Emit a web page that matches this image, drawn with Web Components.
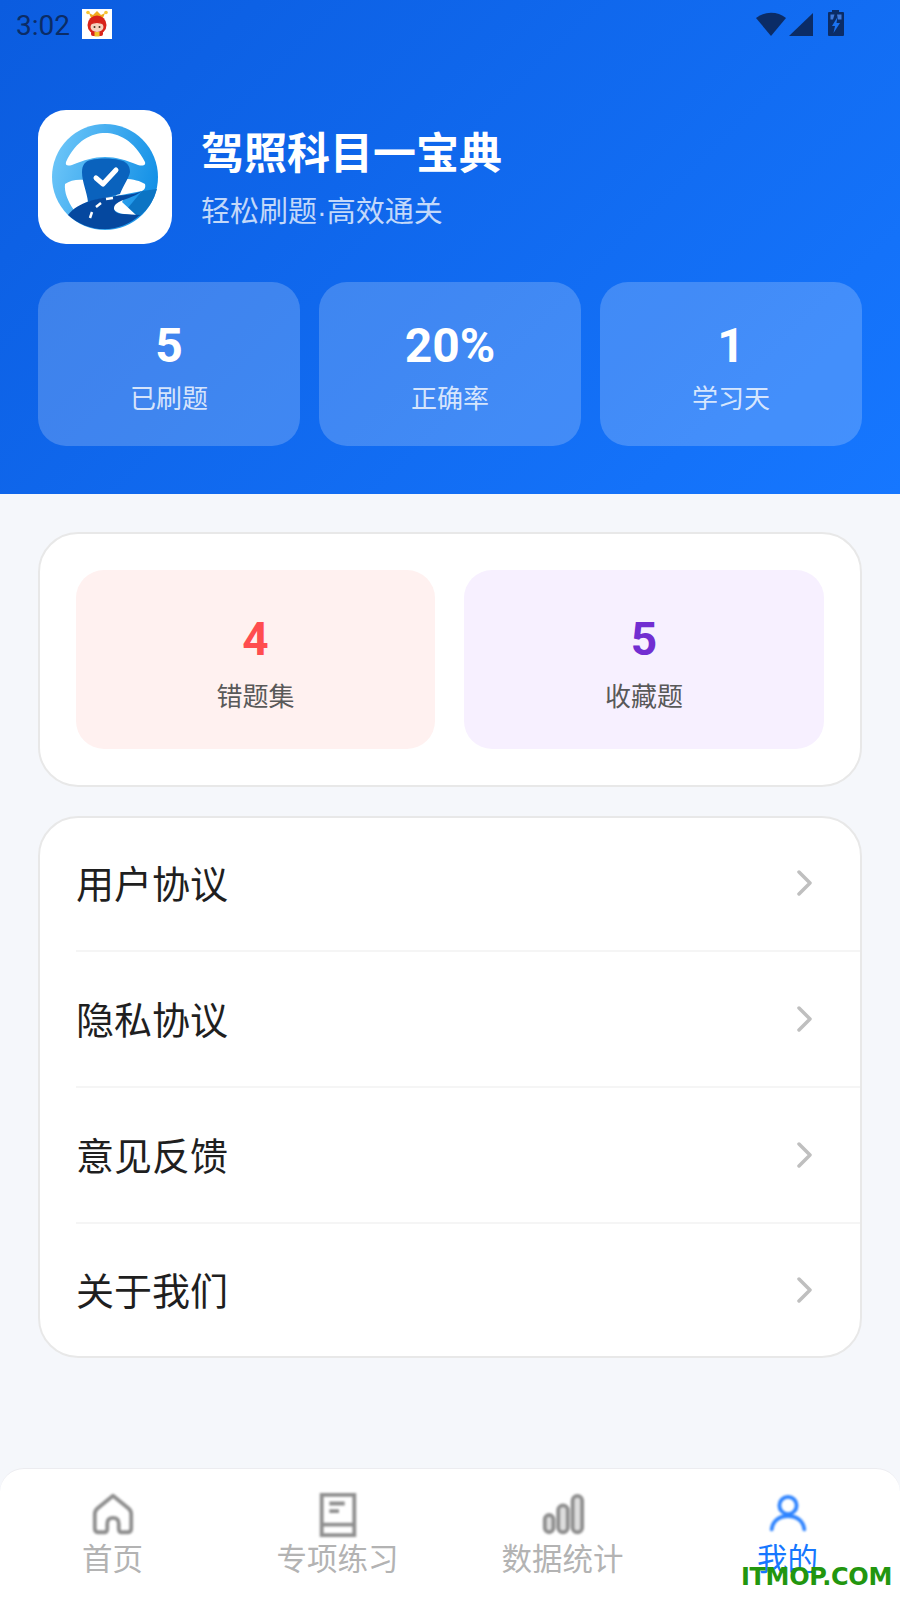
<!DOCTYPE html>
<html lang="zh">
<head>
<meta charset="utf-8">
<title>驾照科目一宝典</title>
<style>
  html, body { margin: 0; padding: 0; }
  body { font-family: "Noto Sans CJK SC", "Liberation Sans", sans-serif; background: #f5f7fb; }
</style>
</head>
<body>
<my-page></my-page>

<script>
const CJK = '"Noto Sans CJK SC", "Liberation Sans", sans-serif';
const NUM = 'Roboto, "Noto Sans CJK SC", sans-serif';

class StatusBar extends HTMLElement {
  constructor() {
    super();
    this.attachShadow({ mode: 'open' }).innerHTML = `
    <style>
      :host { display: flex; align-items: flex-start; height: 52px; padding: 0 56px 0 16px; color: #0b2c66; }
      .time { font: 28px/52px ${NUM}; }
      .mascot { display: block; width: 30px; height: 30px; margin: 9px 0 0 12px; }
      .right { display: block; margin: 10px 0 0 auto; width: 88px; height: 28px; }
    </style>
    <span class="time">3:02</span>
    <svg class="mascot" viewBox="0 0 30 30">
      <rect width="30" height="30" fill="#fff"/>
      <path d="M9 9L7 4L11 6L15 2L19 6L23 4L21 9Z" fill="#f0a81e"/>
      <circle cx="6" cy="3.500" r="1.800" fill="#f7c531"/><circle cx="24" cy="3.500" r="1.800" fill="#f7c531"/>
      <circle cx="15" cy="16" r="9.500" fill="#d8231b"/>
      <rect x="9" y="22" width="12" height="5" rx="2" fill="#d8231b"/>
      <ellipse cx="15" cy="18" rx="6.500" ry="5" fill="#f6d2bf"/>
      <path d="M9 15C11 12 19 12 21 15L15 14Z" fill="#d8231b"/>
      <rect x="12.500" y="23" width="5" height="4.500" fill="#f0c02a"/>
      <circle cx="12.500" cy="18" r="1" fill="#432"/><circle cx="17.500" cy="18" r="1" fill="#432"/>
    </svg>
    <svg class="right" viewBox="0 0 88 28">
      <path d="M15 26L0 8A24 24 0 0 1 30 8Z" fill="currentColor"/>
      <path d="M33 26L57 3V26Z" fill="currentColor"/>
      <path d="M76 0H83V2H87A1 1 0 0 1 88 3V25A1 1 0 0 1 87 26H73A1 1 0 0 1 72 25V3A1 1 0 0 1 73 2H76Z" fill="currentColor"/>
      <path d="M74.500 4.500H78.500L77 9.500H74.500ZM81 4.500H85.500V9.500H82Z" fill="#3f78d8"/>
      <path d="M81.500 7L76 16H79L77.500 23L84 13H80.500Z" fill="#1a72f0"/>
    </svg>`;
  }
}

class AppLogo extends HTMLElement {
  constructor() {
    super();
    this.attachShadow({ mode: 'open' }).innerHTML = `
    <style>
      :host { display: block; width: 134px; height: 134px; border-radius: 28px; background: #fff; overflow: hidden; flex: none; }
      svg { display: block; width: 134px; height: 134px; }
    </style>
    <svg viewBox="0 0 134 134">
      <defs>
        <linearGradient id="ring" x1="0" y1="0.3" x2="1" y2="0.6">
          <stop offset="0" stop-color="#6cc5f8"/>
          <stop offset="1" stop-color="#118fe6"/>
        </linearGradient>
      </defs>
      <circle cx="67" cy="67" r="53" fill="url(#ring)"/>
      <path d="M104 81L119 79A53 53 0 0 1 102 106L84 105Z" fill="#0c74c4"/>
      <path d="M28 52C38 30 54 23 67 23C80 23 96 30 107 52C108 56 104 56 100 55C88 50 78 47 67 47C56 47 46 50 34 55C30 56 27 56 28 52Z" fill="#fff"/>
      <path d="M27 74C32 70 40 69 47 70C48 78 50 84 52 90L36 100C30 92 26 82 27 74Z" fill="#fff"/>
      <path d="M86 69C96 69 102 71 107 74C108 78 106 80 104 81L78 86C82 80 85 75 86 69Z" fill="#fff"/>
      <path d="M53 50C60 48 74 48 81 50C88 51 92 55 92 62C91 68 86 74 82 84L50 92C49 82 44 72 44 62C44 55 47 51 53 50Z" fill="#0a62bd"/>
      <path d="M58 68L65 74L78 60" fill="none" stroke="#fff" stroke-width="5" stroke-linecap="round" stroke-linejoin="round"/>
      <path d="M87 87C80 90 74 94 75 98C77 103 86 105 98 105L84 92Z" fill="#fff"/>
      <path d="M30 105C40 92 60 88 78 86C88 85 98 84 104 81C96 88 84 89 78 94C74 98 76 103 84 104L102 105A53 53 0 0 1 30 105Z" fill="#05489f"/>
      <path d="M52 108L54 102M58 97L63 93M68 89L75 88" fill="none" stroke="#fff" stroke-width="2.500"/>
    </svg>`;
  }
}

class StatCard extends HTMLElement {
  constructor() {
    super();
    this.attachShadow({ mode: 'open' }).innerHTML = `
    <style>
      :host { display: flex; flex-direction: column; align-items: center; height: 164px; box-sizing: border-box; padding-top: 36px; border-radius: 28px; background: rgba(255,255,255,.2); }
      .value { font: 700 48px/56px ${NUM}; color: #fff; }
      .label { margin-top: 5px; font: 26px/36px ${CJK}; color: rgba(255,255,255,.8); }
    </style>
    <div class="value"></div>
    <div class="label"><slot></slot></div>`;
    this.shadowRoot.querySelector('.value').textContent = this.getAttribute('value');
  }
}

class AppHeader extends HTMLElement {
  constructor() {
    super();
    this.attachShadow({ mode: 'open' }).innerHTML = `
    <style>
      :host { display: block; height: 494px; box-sizing: border-box; background: linear-gradient(135deg, #0b5cdf 0%, #1677ff 100%); }
      .brand { display: flex; align-items: center; gap: 29px; margin: 58px 38px 38px; }
      .title { font: 700 43px/54px ${CJK}; color: #fff; }
      .sub { margin-top: 12px; font: 29px/40px ${CJK}; color: rgba(255,255,255,.75); }
      .sub span { font-family: "Liberation Sans", sans-serif; }
      .stats { display: grid; grid-template-columns: repeat(3, 1fr); gap: 19px; margin: 0 38px; }
    </style>
    <status-bar></status-bar>
    <div class="brand">
      <app-logo></app-logo>
      <div>
        <div class="title">驾照科目一宝典</div>
        <div class="sub">轻松刷题<span>·</span>高效通关</div>
      </div>
    </div>
    <div class="stats"><slot></slot></div>`;
  }
}

class CountTile extends HTMLElement {
  constructor() {
    super();
    this.attachShadow({ mode: 'open' }).innerHTML = `
    <style>
      :host { display: flex; flex-direction: column; align-items: center; height: 179px; box-sizing: border-box; padding-top: 42px; border-radius: 28px; }
      :host([tone="red"]) { background: #fff1f0; }
      :host([tone="purple"]) { background: #f7f0ff; }
      .value { font: 700 46px/54px ${NUM}; }
      :host([tone="red"]) .value { color: #ff4d4f; }
      :host([tone="purple"]) .value { color: #722ed1; }
      .label { margin-top: 11px; font: 26px/36px ${CJK}; color: #595959; }
    </style>
    <div class="value"></div>
    <div class="label"><slot></slot></div>`;
    this.shadowRoot.querySelector('.value').textContent = this.getAttribute('value');
  }
}

class AppCard extends HTMLElement {
  constructor() {
    super();
    this.attachShadow({ mode: 'open' }).innerHTML = `
    <style>
      :host { display: block; box-sizing: border-box; background: #fff; border: 2px solid #e8e8e8; border-radius: 40px; overflow: hidden; }
      :host([tiles]) { display: grid; grid-template-columns: 359px 360px; gap: 29px; padding: 36px; }
    </style>
    <slot></slot>`;
  }
}

class MenuRow extends HTMLElement {
  constructor() {
    super();
    this.attachShadow({ mode: 'open' }).innerHTML = `
    <style>
      :host { display: flex; align-items: center; box-sizing: content-box; height: 132px; padding: 0 46px 2px 0; margin-left: 36px; border-bottom: 2px solid #f5f5f5; font: 38px/50px ${CJK}; color: #1f1f1f; }
      :host([first]) { height: 128px; padding-bottom: 4px; }
      :host([last]) { border-bottom: 0; height: 130px; }
      svg { display: block; width: 20px; height: 28px; margin: 2px 0 0 auto; filter: blur(.6px); }
    </style>
    <slot></slot>
    <svg viewBox="0 0 20 28"><path d="M5 3L16 14L5 25" fill="none" stroke="#bfbfbf" stroke-width="3.500" stroke-linecap="round" stroke-linejoin="round"/></svg>`;
  }
}

const TAB_ICONS = {
  home: '<path d="M24 4L8 17C5.500 19 5 20 5 23V38C5 41 7 42 9 42H15C17 42 18 41 18 38V33C18 29 20 27 24 27C28 27 30 29 30 33V38C30 41 31 42 33 42H39C41 42 43 41 43 38V23C43 20 42.500 19 40 17Z" fill="none" stroke="currentColor" stroke-width="4" stroke-linejoin="round"/>',
  book: '<path d="M7 3H41V45H7ZM7 34H41M15 12H31M15 20H25" fill="none" stroke="currentColor" stroke-width="4"/>',
  bars: '<rect x="5" y="24" width="9" height="18" rx="4.500" fill="#ddd" stroke="currentColor" stroke-width="4"/><rect x="19" y="14" width="10" height="28" rx="5" fill="#ddd" stroke="currentColor" stroke-width="4"/><rect x="34" y="4" width="10" height="38" rx="5" fill="#ddd" stroke="currentColor" stroke-width="4"/>',
  user: '<circle cx="24" cy="14" r="9" fill="none" stroke="currentColor" stroke-width="4"/><path d="M7 39C8 30 15 25 24 25C33 25 40 30 41 39" fill="none" stroke="currentColor" stroke-width="4" stroke-linecap="round"/>'
};

class TabItem extends HTMLElement {
  constructor() {
    super();
    this.attachShadow({ mode: 'open' }).innerHTML = `
    <style>
      :host { display: flex; flex-direction: column; align-items: center; color: #b3b3b3; }
      :host([active]) { color: #1677ff; }
      svg { display: block; width: 46px; height: 46px; color: #8f8f8f; filter: blur(1px); }
      :host([active]) svg { color: #2f84ff; }
      .label { margin-top: 1px; font: 30.500px/36px ${CJK}; }
    </style>
    <svg viewBox="0 0 48 48">${TAB_ICONS[this.getAttribute('icon')]}</svg>
    <div class="label"><slot></slot></div>`;
  }
}

class TabBar extends HTMLElement {
  constructor() {
    super();
    this.attachShadow({ mode: 'open' }).innerHTML = `
    <style>
      :host { display: grid; grid-template-columns: repeat(4, 1fr); position: relative; height: 132px; box-sizing: border-box; padding-top: 23px; background: #fff; border-top: 1px solid #ececf0; border-radius: 24px 24px 0 0; }
      .mark { position: absolute; right: 8px; bottom: 9px; font: 700 24px/28px "DejaVu Sans", sans-serif; letter-spacing: -.3px; color: #22960f; white-space: nowrap; }
    </style>
    <slot></slot>
    <div class="mark">ITMOP.COM</div>`;
  }
}

class MyPage extends HTMLElement {
  constructor() {
    super();
    this.attachShadow({ mode: 'open' }).innerHTML = `
    <style>
      :host { display: flex; flex-direction: column; height: 1600px; background: #f5f7fb; }
      main { flex: 1; display: flex; flex-direction: column; gap: 29px; padding: 38px 38px 0; }
    </style>
    <app-header>
      <stat-card value="5">已刷题</stat-card>
      <stat-card value="20%">正确率</stat-card>
      <stat-card value="1">学习天</stat-card>
    </app-header>
    <main>
      <app-card tiles>
        <count-tile tone="red" value="4">错题集</count-tile>
        <count-tile tone="purple" value="5">收藏题</count-tile>
      </app-card>
      <app-card>
        <menu-row first>用户协议</menu-row>
        <menu-row>隐私协议</menu-row>
        <menu-row>意见反馈</menu-row>
        <menu-row last>关于我们</menu-row>
      </app-card>
    </main>
    <tab-bar>
      <tab-item icon="home">首页</tab-item>
      <tab-item icon="book">专项练习</tab-item>
      <tab-item icon="bars">数据统计</tab-item>
      <tab-item icon="user" active>我的</tab-item>
    </tab-bar>`;
  }
}

customElements.define('status-bar', StatusBar);
customElements.define('app-logo', AppLogo);
customElements.define('stat-card', StatCard);
customElements.define('app-header', AppHeader);
customElements.define('count-tile', CountTile);
customElements.define('app-card', AppCard);
customElements.define('menu-row', MenuRow);
customElements.define('tab-item', TabItem);
customElements.define('tab-bar', TabBar);
customElements.define('my-page', MyPage);
</script>
</body>
</html>
